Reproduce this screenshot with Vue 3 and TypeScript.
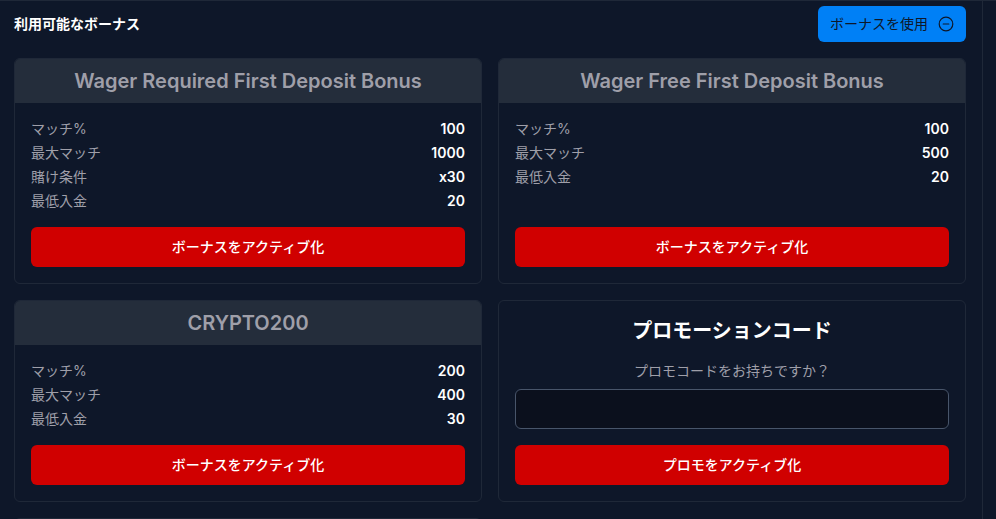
<script setup lang="ts">
import { ref } from 'vue'

interface Term {
  label: string
  value: string
}

interface Bonus {
  name: string
  terms: Term[]
}

const bonuses: Bonus[] = [
  {
    name: 'Wager Required First Deposit Bonus',
    terms: [
      { label: 'マッチ%', value: '100' },
      { label: '最大マッチ', value: '1000' },
      { label: '賭け条件', value: 'x30' },
      { label: '最低入金', value: '20' },
    ],
  },
  {
    name: 'Wager Free First Deposit Bonus',
    terms: [
      { label: 'マッチ%', value: '100' },
      { label: '最大マッチ', value: '500' },
      { label: '最低入金', value: '20' },
    ],
  },
  {
    name: 'CRYPTO200',
    terms: [
      { label: 'マッチ%', value: '200' },
      { label: '最大マッチ', value: '400' },
      { label: '最低入金', value: '30' },
    ],
  },
]

const promoCode = ref('')
</script>

<template>
  <div class="page">
    <main class="panel">
      <header class="toolbar">
        <h1 class="heading">利用可能なボーナス</h1>
        <button type="button" class="use-bonus">
          <span>ボーナスを使用</span>
          <svg class="icon" viewBox="0 0 16 16" aria-hidden="true">
            <circle cx="8" cy="8" r="6.8" />
            <path d="M5.2 8h5.6" />
          </svg>
        </button>
      </header>

      <div class="grid">
        <article v-for="bonus in bonuses" :key="bonus.name" class="card">
          <h2 class="card-title">{{ bonus.name }}</h2>
          <div class="card-body">
            <dl class="terms">
              <div v-for="term in bonus.terms" :key="term.label" class="term">
                <dt>{{ term.label }}</dt>
                <dd>{{ term.value }}</dd>
              </div>
            </dl>
            <button type="button" class="action">ボーナスをアクティブ化</button>
          </div>
        </article>

        <form class="card promo" @submit.prevent>
          <h2 class="promo-title">プロモーションコード</h2>
          <label class="promo-label" for="promo-code">プロモコードをお持ちですか？</label>
          <input id="promo-code" v-model="promoCode" class="promo-input" type="text" />
          <button type="submit" class="action">プロモをアクティブ化</button>
        </form>

        <article class="card"></article>
      </div>
    </main>
  </div>
</template>

<style>
body {
  background: #0e1729;
}
</style>

<style scoped>
* {
  box-sizing: border-box;
}

.page {
  height: 100vh;
  overflow: hidden;
  padding-right: 13px;
  border-top: 1px solid #1f2838;
  background: #0e1729;
  color: #ffffff;
  font-family: Inter, 'Noto Sans CJK JP', sans-serif;
  font-size: 14px;
  line-height: 24px;
}

.panel {
  min-height: 100%;
  padding: 5px 16px 16px 14px;
  border-right: 1px solid #1f2838;
}

.toolbar {
  display: flex;
  align-items: center;
  justify-content: space-between;
  margin-bottom: 16px;
}

h1,
h2,
dl,
dd {
  margin: 0;
}

.heading {
  font-size: 14px;
  font-weight: 700;
}

button,
input {
  border: 0;
  border-radius: 6px;
  font: inherit;
}

.use-bonus {
  display: flex;
  align-items: center;
  gap: 10px;
  height: 36px;
  padding: 0 12px;
  background: #0080f6;
  color: #0e1729;
}

.icon {
  width: 16px;
  height: 16px;
  fill: none;
  stroke: currentColor;
  stroke-width: 1.2;
  stroke-linecap: round;
}

.grid {
  display: grid;
  grid-template-columns: repeat(2, minmax(0, 1fr));
  gap: 16px;
}

.card {
  display: flex;
  flex-direction: column;
  min-height: 80px;
  border: 1px solid #1f2838;
  border-radius: 6px;
  overflow: hidden;
}

.card-title {
  padding: 8px;
  background: #242d3b;
  color: #9f9fa9;
  font-size: 20px;
  font-weight: 600;
  line-height: 28px;
  text-align: center;
}

.card-body {
  display: flex;
  flex: 1;
  flex-direction: column;
  justify-content: space-between;
  gap: 14px;
  padding: 14px 16px 16px;
}

.term {
  display: flex;
  justify-content: space-between;
}

dt {
  color: #9f9fa9;
}

dd {
  font-weight: 600;
}

.action {
  width: 100%;
  height: 40px;
  background: #d00000;
  color: #ffffff;
  font-weight: 500;
}

.promo {
  padding: 16px;
}

.promo-title {
  margin-bottom: 14px;
  font-size: 20px;
  font-weight: 700;
  line-height: 28px;
  text-align: center;
}

.promo-label {
  margin-bottom: 6px;
  color: #9f9fa9;
  text-align: center;
}

.promo-input {
  width: 100%;
  height: 40px;
  margin-bottom: 16px;
  padding: 0 12px;
  border: 1px solid #48556a;
  background: #0b101d;
  color: #ffffff;
}
</style>
